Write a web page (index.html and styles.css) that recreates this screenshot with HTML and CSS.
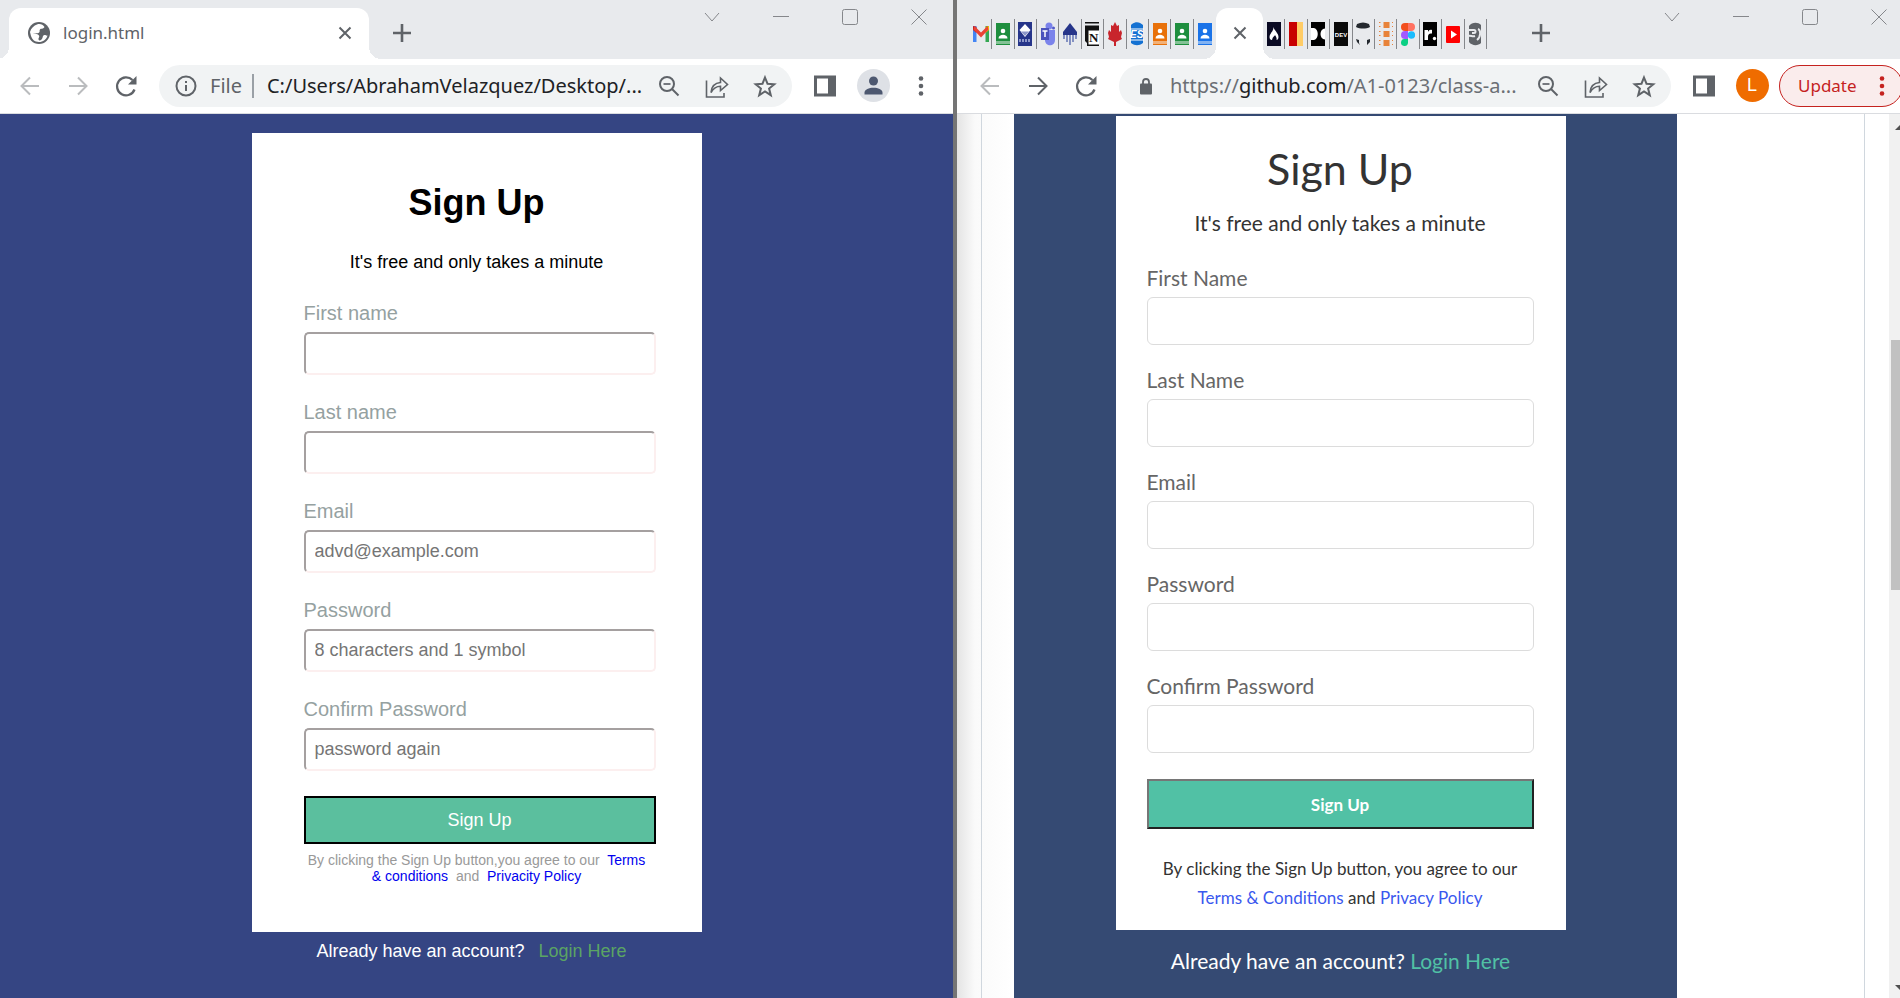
FILE: index.html
```html
<!DOCTYPE html>
<html lang="en">
<head>
<meta charset="utf-8">
<title>Sign Up</title>
<link rel="stylesheet" href="styles.css">
</head>
<body>
<svg class="sprite" aria-hidden="true">
  <symbol id="back" viewBox="0 0 24 24"><path d="M21 12H4M12 3.500L3.500 12l8.500 8.500" fill="none" stroke="currentColor" stroke-width="2"/></symbol>
  <symbol id="forward" viewBox="0 0 24 24"><path d="M3 12h17M12 3.500l8.500 8.500-8.500 8.500" fill="none" stroke="currentColor" stroke-width="2"/></symbol>
  <symbol id="reload" viewBox="0 0 24 24"><path d="M20.500 15.500A9 9 0 1 1 18.500 6" fill="none" stroke="currentColor" stroke-width="2.300"/><path d="M22.500 2v8.500H14z" fill="currentColor"/></symbol>
  <symbol id="zoomout" viewBox="0 0 24 24"><g fill="none" stroke="currentColor" stroke-width="2"><circle cx="10" cy="10" r="7"/><path d="M15 15l6.500 6.500"/><path d="M6.500 10h7" stroke-width="1.700"/></g></symbol>
  <symbol id="share" viewBox="0 0 24 24"><g fill="none" stroke="currentColor" stroke-width="1.600"><path d="M1.500 6.500v16.500h17.500v-4"/><path d="M6 18.500c.5-6 3-9.500 9.500-10V4l7 6.500-7 6v-4.200c-4 0-7 1.700-9.500 6.200z"/></g></symbol>
  <symbol id="star" viewBox="0 0 24 24"><path d="M12 3.500l2.500 6.200 6.800.5-5.200 4.300 1.700 6.700-5.800-3.700-5.800 3.700 1.700-6.700-5.200-4.300 6.800-.5z" fill="none" stroke="currentColor" stroke-width="2"/></symbol>
  <symbol id="panel" viewBox="0 0 24 24"><path d="M1 1.500h22v21H1zM4 4.500v15h11v-15z" fill="currentColor" fill-rule="evenodd"/></symbol>
  <symbol id="dots" viewBox="0 0 24 24"><g fill="currentColor"><circle cx="12" cy="4.500" r="2.300"/><circle cx="12" cy="12" r="2.300"/><circle cx="12" cy="19.500" r="2.300"/></g></symbol>
  <symbol id="cross" viewBox="0 0 24 24"><path d="M6.500 6.500l11 11M17.500 6.500l-11 11" fill="none" stroke="currentColor" stroke-width="2"/></symbol>
  <symbol id="plus" viewBox="0 0 24 24"><path d="M12 3v18M3 12h18" fill="none" stroke="currentColor" stroke-width="2.600"/></symbol>
  <symbol id="chevron" viewBox="0 0 16 16"><path d="M1 4l7 8 7-8" fill="none" stroke="currentColor"/></symbol>
  <symbol id="minimize" viewBox="0 0 16 16"><path d="M0 7.500h16" fill="none" stroke="currentColor"/></symbol>
  <symbol id="maximize" viewBox="0 0 16 16"><rect x=".5" y=".5" width="15" height="15" rx="2" fill="none" stroke="currentColor"/></symbol>
  <symbol id="close" viewBox="0 0 16 16"><path d="M.5.500l15 15M15.500.500l-15 15" fill="none" stroke="currentColor"/></symbol>
  <symbol id="globe" viewBox="0 0 24 24"><circle cx="12" cy="12" r="11" fill="currentColor"/><path d="M10 3.500c3-1 6 0 7.500 2.500-1.500 2.500-3.500 1-4.500 2.500s.5 2.500-1.500 3.500-4-.5-5.500 0c2.500 1 5 .500 6 2.500 1 1.500-1 2.500-.5 4 .5 1.500 2 1 3 0 2-2 .5-4 3-4.500 1.500 0 2 1 3 .5-1 4-4.500 6.500-8.500 6.500C7.500 21 5 18 4 15l-1-4C4 7 7 4.500 10 3.500z" fill="#fff"/></symbol>
  <symbol id="info" viewBox="0 0 24 24"><circle cx="12" cy="12" r="9.500" fill="none" stroke="currentColor" stroke-width="2"/><path d="M11 11h2v6h-2zM11 7h2v2h-2z" fill="currentColor"/></symbol>
  <symbol id="lock" viewBox="0 0 24 24"><rect x="6" y="9.500" width="12" height="11" rx="1" fill="currentColor"/><path d="M9 10V8a3 3 0 0 1 6 0v2" fill="none" stroke="currentColor" stroke-width="1.800"/></symbol>
  <symbol id="classroom" viewBox="0 0 14 24"><path d="M0 1h14v22H0z" fill="currentColor"/><circle cx="7" cy="9" r="2.300" fill="#fff"/><path d="M2.500 16.500c0-5 9-5 9 0z" fill="#fff"/><path d="M0 19h14v3H0z" fill="#fff" opacity=".45"/></symbol>
</svg>

<main class="desktop">
  <section class="window window-left" aria-label="login.html">
    <header class="tabstrip">
      <div class="tab tab-wide">
        <svg class="icon"><use href="#globe"/></svg>
        <span class="tab-title">login.html</span>
        <button class="plain" aria-label="Close tab"><svg class="icon"><use href="#cross"/></svg></button>
      </div>
      <button class="plain new-tab" aria-label="New tab"><svg class="icon"><use href="#plus"/></svg></button>
      <div class="controls">
        <button class="control" aria-label="Search tabs"><svg><use href="#chevron"/></svg></button>
        <button class="control" aria-label="Minimize"><svg><use href="#minimize"/></svg></button>
        <button class="control" aria-label="Maximize"><svg><use href="#maximize"/></svg></button>
        <button class="control" aria-label="Close"><svg><use href="#close"/></svg></button>
      </div>
    </header>
    <nav class="toolbar">
      <button class="tool muted" aria-label="Back"><svg class="icon"><use href="#back"/></svg></button>
      <button class="tool muted" aria-label="Forward"><svg class="icon"><use href="#forward"/></svg></button>
      <button class="tool" aria-label="Reload"><svg class="icon"><use href="#reload"/></svg></button>
      <div class="omnibox">
        <svg class="icon"><use href="#info"/></svg>
        <span class="scheme">File</span>
        <span class="url">C:/Users/AbrahamVelazquez/Desktop/...</span>
        <button class="tool" aria-label="Zoom"><svg class="icon"><use href="#zoomout"/></svg></button>
        <button class="tool" aria-label="Share"><svg class="icon"><use href="#share"/></svg></button>
        <button class="tool" aria-label="Bookmark"><svg class="icon"><use href="#star"/></svg></button>
      </div>
      <button class="tool" aria-label="Side panel"><svg class="icon"><use href="#panel"/></svg></button>
      <button class="tool" aria-label="Profile"><svg class="avatar" viewBox="0 0 33 33"><circle cx="16.500" cy="16.500" r="16.500" fill="#dee1e6"/><circle cx="16.500" cy="12" r="4.500" fill="#4d5870"/><path d="M7.500 25.500v-2c0-6.500 18-6.500 18 0v2z" fill="#4d5870"/></svg></button>
      <button class="tool" aria-label="Menu"><svg class="icon"><use href="#dots"/></svg></button>
    </nav>
    <div class="page page-indigo">
      <form class="card card-a">
        <h1 class="title-a">Sign Up</h1>
        <p class="lead-a">It's free and only takes a minute</p>
        <div class="fields-a">
          <div class="field-a"><label for="a-first">First name</label><input id="a-first" type="text"></div>
          <div class="field-a"><label for="a-last">Last name</label><input id="a-last" type="text"></div>
          <div class="field-a"><label for="a-email">Email</label><input id="a-email" type="email" placeholder="advd@example.com"></div>
          <div class="field-a"><label for="a-pass">Password</label><input id="a-pass" type="password" placeholder="8 characters and 1 symbol"></div>
          <div class="field-a"><label for="a-again">Confirm Password</label><input id="a-again" type="password" placeholder="password again"></div>
          <button class="submit-a" type="button">Sign Up</button>
        </div>
        <p class="terms-a">By clicking the Sign Up button,you agree to our&nbsp; <a href="#">Terms<br>&amp; conditions</a>&nbsp; and&nbsp; <a href="#">Privacity Policy</a></p>
      </form>
      <p class="login-a">Already have an account? &nbsp;<a href="#">Login Here</a></p>
    </div>
  </section>

  <section class="window window-right" aria-label="GitHub">
    <header class="tabstrip">
      <div class="favicons favicons-before">
        <span class="fav"><svg class="wide" viewBox="0 0 16 24"><path d="M0 4v16h3.500V4z" fill="#4285f4"/><path d="M12.500 4H16v16h-3.500z" fill="#34a853"/><path d="M0 4l3.500 1v6L0 8z" fill="#c5221f"/><path d="M16 4l-3.500 1v6L16 8z" fill="#fbbc04"/><path d="M1.500 4L8 10.500 14.500 4l1 3.500L8 15.500.5 7.500z" fill="#ea4335"/></svg></span>
        <span class="fav green"><svg><use href="#classroom"/></svg></span>
        <span class="fav"><svg viewBox="0 0 14 24"><path d="M0 0h14v24H0z" fill="#26358a"/><path d="M7 2l5.500 6L7 15 1.500 8z" fill="#fff"/><path d="M3 9.500h8L7 14z" fill="#8d97c9"/><path d="M1 18.500h12" stroke="#8d97c9" stroke-width="3" stroke-dasharray="2 1"/></svg></span>
        <span class="fav"><svg viewBox="0 0 14 24"><circle cx="8" cy="4" r="3.500" fill="#7b83eb"/><circle cx="12.500" cy="6" r="1.500" fill="#5059c9"/><path d="M4 8h10v10c0 7-10 7-10 0z" fill="#7b83eb"/><path d="M0 6h8v12H0z" fill="#4b53bc"/><path d="M1.500 9h5M4 9v6" stroke="#fff" stroke-width="1.500"/></svg></span>
        <span class="fav"><svg viewBox="0 0 14 24"><path d="M7 1l7 9v3H0v-3z" fill="#26358a"/><path d="M1 13v4M4 13v7M7 13v10M10 13v7M13 13v4" stroke="#5a6bb0" stroke-width="1.400"/></svg></span>
        <span class="fav"><svg viewBox="0 0 14 24"><path d="M0 0h14v1.500H0zM0 3.500h14V7H2v14l-2-2z" fill="#111"/><path d="M2 7h12v17H2z" fill="#111"/><path d="M3.500 8.500H14v14H3.500z" fill="#fff"/><text x="4" y="20" class="glyph-n">N</text></svg></span>
        <span class="fav"><svg viewBox="0 0 14 24"><path d="M7 0l2 4 2-1v7l2-2 1 3-1 4 1 2-6 3v4H6v-4l-6-3 1-2-1-4 1-3 2 2V3l2 1z" fill="#c8252c"/></svg></span>
        <span class="fav"><svg viewBox="0 0 14 24"><path d="M2 2c4-3 8-2 11 1v18c-4 3-8 3-12 0V3z" fill="#1471d2"/><text x="0" y="16" class="glyph-es">ES</text><path d="M0 7h14M0 18h14" stroke="#fff"/></svg></span>
        <span class="fav orange"><svg><use href="#classroom"/></svg></span>
        <span class="fav green"><svg><use href="#classroom"/></svg></span>
        <span class="fav blue"><svg><use href="#classroom"/></svg></span>
      </div>
      <div class="tab tab-narrow">
        <button class="plain" aria-label="Close tab"><svg class="icon"><use href="#cross"/></svg></button>
      </div>
      <div class="favicons favicons-after">
        <span class="fav"><svg viewBox="0 0 14 24"><path d="M0 0h14v24H0z" fill="#0a0a23"/><path d="M6.500 5c1 4 5 6 5 10 0 2-1 3-2 3 .5-2-.5-3-1.500-5-1 2-2 1-3 5-1.500 0-2.500-1-2.500-3 0-4 4-5 4-10z" fill="#fff"/></svg></span>
        <span class="fav"><svg viewBox="0 0 14 24"><path d="M0 0h8v24H0z" fill="#c80000"/><path d="M8 0h6v24H8z" fill="#ffcc66"/></svg></span>
        <span class="fav"><svg viewBox="0 0 14 24"><path d="M0 0h14v24H0z" fill="#000"/><path d="M0 6h3c5 1 5 11 0 12H0z" fill="#fff"/><path d="M14 6.500c-6 0-6 11 0 11z" fill="#fff"/></svg></span>
        <span class="fav"><svg viewBox="0 0 14 24"><path d="M0 0h14v24H0z" fill="#0a0a0a"/><text x="7" y="15" text-anchor="middle" class="glyph-dev">DEV</text></svg></span>
        <span class="fav"><svg viewBox="0 0 14 24"><path d="M1 2c4-2 8-2 12 0l1 3c-4 2-10 2-14 0z" fill="#24292f"/><path d="M0 17l3 1v3l1 2-3-3zM14 17l-3 1v5l3-3z" fill="#24292f"/></svg></span>
        <span class="fav"><svg viewBox="0 0 14 24"><g fill="#e8833a"><path d="M4.500 0h6v6h-6zM4.500 9h6v6h-6zM4.500 18h6v6h-6z"/><path d="M0 0h1.500v1H0zM0 4h1.500v1H0zM0 9h1.500v1H0zM0 13h1.500v1H0zM0 18h1.500v1H0zM0 22h1.500v1H0zM13 0h1v1h-1zM13 4h1v1h-1zM13 9h1v1h-1zM13 13h1v1h-1zM13 18h1v1h-1zM13 22h1v1h-1z"/></g></svg></span>
        <span class="fav"><svg viewBox="0 0 14 24"><path d="M7 1H4a4 4 0 0 0 0 8h3z" fill="#f24e1e"/><path d="M7 1h3a4 4 0 0 1 0 8H7z" fill="#ff7262"/><path d="M7 9H4a4 4 0 0 0 0 8h3z" fill="#a259ff"/><circle cx="10.500" cy="13" r="3.700" fill="#1abcfe"/><path d="M7 17H4a3.500 3.500 0 1 0 3 4z" fill="#0acf83"/></svg></span>
        <span class="fav"><svg viewBox="0 0 14 24"><path d="M0 0h14v24H0z" fill="#000"/><path d="M1.500 18V8h3.500v2C6 8 7 7.500 9 8v3.500c-3-.5-4 1-4 3V18z" fill="#fff"/><circle cx="11.500" cy="16.500" r="1.700" fill="#fff"/></svg></span>
        <span class="fav"><svg viewBox="0 0 14 24"><rect y="4" width="14" height="17" rx="1" fill="#f00"/><path d="M5 8.500l6 4-6 4z" fill="#fff"/></svg></span>
        <span class="fav"><svg viewBox="0 0 14 24"><path d="M1 4c3-4 9-4 12-1v18c-3 3-9 3-12-1z" fill="#5f6368"/><path d="M0 8h6c2 0 2 3 0 3H4M0 14c3-1 4 1 7 0M10 7c3 1 3 8-1 11" fill="none" stroke="#e8eaed" stroke-width="2"/></svg></span>
      </div>
      <button class="plain new-tab new-tab-far" aria-label="New tab"><svg class="icon"><use href="#plus"/></svg></button>
      <div class="controls controls-edge">
        <button class="control" aria-label="Search tabs"><svg><use href="#chevron"/></svg></button>
        <button class="control" aria-label="Minimize"><svg><use href="#minimize"/></svg></button>
        <button class="control" aria-label="Maximize"><svg><use href="#maximize"/></svg></button>
        <button class="control" aria-label="Close"><svg><use href="#close"/></svg></button>
      </div>
    </header>
    <nav class="toolbar toolbar-right">
      <button class="tool muted" aria-label="Back"><svg class="icon"><use href="#back"/></svg></button>
      <button class="tool" aria-label="Forward"><svg class="icon"><use href="#forward"/></svg></button>
      <button class="tool" aria-label="Reload"><svg class="icon"><use href="#reload"/></svg></button>
      <div class="omnibox">
        <svg class="icon"><use href="#lock"/></svg>
        <span class="url url-web">https://<b>github.com</b>/A1-0123/class-a...</span>
        <button class="tool" aria-label="Zoom"><svg class="icon"><use href="#zoomout"/></svg></button>
        <button class="tool" aria-label="Share"><svg class="icon"><use href="#share"/></svg></button>
        <button class="tool" aria-label="Bookmark"><svg class="icon"><use href="#star"/></svg></button>
      </div>
      <button class="tool" aria-label="Side panel"><svg class="icon"><use href="#panel"/></svg></button>
      <button class="tool" aria-label="Profile"><span class="initial">L</span></button>
      <button class="update">Update<svg class="icon"><use href="#dots"/></svg></button>
    </nav>
    <div class="page page-github">
      <div class="readme">
        <div class="band">
          <form class="card card-b">
            <h1 class="title-b">Sign Up</h1>
            <p class="lead-b">It's free and only takes a minute</p>
            <div class="field-b"><label for="b-first">First Name</label><input id="b-first" type="text"></div>
            <div class="field-b"><label for="b-last">Last Name</label><input id="b-last" type="text"></div>
            <div class="field-b"><label for="b-email">Email</label><input id="b-email" type="email"></div>
            <div class="field-b"><label for="b-pass">Password</label><input id="b-pass" type="password"></div>
            <div class="field-b"><label for="b-again">Confirm Password</label><input id="b-again" type="password"></div>
            <button class="submit-b" type="button">Sign Up</button>
            <p class="terms-b">By clicking the Sign Up button, you agree to our<br><a href="#">Terms &amp; Conditions</a> and <a href="#">Privacy Policy</a></p>
          </form>
          <p class="login-b">Already have an account? <a href="#">Login Here</a></p>
        </div>
      </div>
      <div class="scrollbar"><i class="arrow-up"></i><i class="thumb"></i><i class="arrow-down"></i></div>
    </div>
  </section>
</main>
</body>
</html>
```
FILE: styles.css
```css
* { box-sizing: border-box; }

body {
  margin: 0;
  font-family: "Liberation Sans", Arial, sans-serif;
}

h1, p { margin: 0; font-weight: normal; }
a { text-decoration: none; }
button { font-family: inherit; cursor: pointer; }
.sprite { position: absolute; width: 0; height: 0; }

.desktop {
  display: flex;
  height: 100vh;
  overflow: hidden;
}

.window {
  display: flex;
  flex-direction: column;
  min-width: 0;
  background: #fff;
}

.window-left { flex: 953 1 0; border-right: 4px solid #757575; }
.window-right { flex: 943 1 0; overflow: hidden; }

/* Tab strip */
.tabstrip {
  display: flex;
  align-items: flex-end;
  flex: none;
  height: 59px;
  background: #e8eaed;
  color: #5f6368;
}

.window-left .tabstrip { padding-left: 9px; }
.window-right .tabstrip { padding-left: 13px; }

.tab {
  position: relative;
  display: flex;
  align-items: center;
  height: 51px;
  padding-bottom: 2px;
  border-radius: 12px 12px 0 0;
  background: #fff;
}

.tab::before,
.tab::after {
  content: "";
  position: absolute;
  bottom: 0;
  width: 12px;
  height: 12px;
}

.tab::before { right: 100%; background: radial-gradient(circle at 0 0, transparent 12px, #fff 12px); }
.tab::after { left: 100%; background: radial-gradient(circle at 100% 0, transparent 12px, #fff 12px); }

.tab-wide { flex: 0 1 360px; gap: 12px; padding-left: 18px; padding-right: 12px; }
.tab-narrow { flex: none; width: 47px; justify-content: center; }
.tab-title { flex: 1; font: 17px "Noto Sans", sans-serif; }

.icon { display: block; width: 24px; height: 24px; flex: none; }

.plain {
  padding: 0;
  border: 0;
  background: none;
  color: #5f6368;
}

.new-tab { margin: 0 0 14px 21px; }
.new-tab-far { margin-left: 42px; }

.controls {
  display: flex;
  align-self: flex-start;
  margin-left: auto;
}

.control {
  display: flex;
  justify-content: center;
  width: 69px;
  padding: 9px 0;
  border: 0;
  background: none;
  color: #85878b;
}

.control svg { width: 16px; height: 16px; }
.controls-edge { margin-right: -13px; }

.favicons {
  display: grid;
  grid-auto-flow: column;
  grid-auto-columns: 1fr;
  margin-bottom: 10px;
  min-width: 0;
}

.favicons-before { width: 246px; }
.favicons-after { width: 224px; }

.fav {
  display: flex;
  align-items: center;
  justify-content: center;
  height: 30px;
  border-right: 1px solid #85878b;
}

.favicons-before .fav:last-child { border-right: 0; }
.fav svg { width: 14px; height: 24px; overflow: hidden; }
.fav .wide { width: 16px; }
.green { color: #1e8e3e; }
.orange { color: #e8710a; }
.blue { color: #1a73e8; }
.glyph-n { font: bold 13px "Liberation Serif", serif; fill: #111; }
.glyph-es { font: italic bold 10px "Liberation Sans", sans-serif; fill: #fff; }
.glyph-dev { font: bold 6px "Liberation Sans", sans-serif; fill: #fff; }

/* Toolbar */
.toolbar {
  display: flex;
  align-items: center;
  flex: none;
  height: 55px;
  padding: 0 8px 1px 6px;
  border-bottom: 1px solid #dadce0;
}

.toolbar-right { padding-left: 9px; padding-right: 0; }

.tool {
  display: flex;
  flex: none;
  justify-content: center;
  align-items: center;
  width: 48px;
  height: 40px;
  padding: 0;
  border: 0;
  background: none;
  color: #5f6368;
}

.tool.muted { color: #babcbe; }

.omnibox {
  display: flex;
  flex: 1;
  align-items: center;
  min-width: 0;
  height: 42px;
  margin: 0 9px;
  padding: 0 3px 0 15px;
  border-radius: 21px;
  background: #f1f3f4;
  color: #5f6368;
  font: 20px "Noto Sans", sans-serif;
}

.scheme {
  margin-left: 12px;
  padding-right: 10px;
  border-right: 2px solid #9aa0a6;
  line-height: 24px;
}

.url {
  flex: 1;
  margin-left: 13px;
  overflow: hidden;
  white-space: nowrap;
  color: #202124;
}

.url-web { margin-left: 12px; color: #6b6f74; }
.url-web b { font-weight: normal; color: #202124; }

.avatar { width: 33px; height: 33px; }

.initial {
  width: 33px;
  height: 33px;
  border-radius: 50%;
  background: #ef6c00;
  color: #fff;
  font-size: 18px;
  line-height: 33px;
}

.update {
  display: flex;
  flex: none;
  align-items: center;
  justify-content: space-between;
  width: 124px;
  height: 42px;
  margin: 0 -3px 0 3px;
  padding: 0 8px 0 18px;
  border: 1px solid #c5221f;
  border-radius: 21px;
  background: #faecec;
  color: #c5221f;
  font: 17px "Noto Sans", sans-serif;
}

/* Pages */
.page { flex: 1; min-height: 0; overflow: hidden; }
.card { background: #fff; }

.page-indigo { padding-top: 19px; background: #354583; }

.card-a {
  width: 450px;
  margin: 0 auto;
  padding: 49px 0 48px;
}

.title-a {
  font-size: 36px;
  font-weight: bold;
  line-height: 42px;
  text-align: center;
  color: #000;
}

.lead-a {
  margin: 28px 0 29px;
  font-size: 18px;
  line-height: 20px;
  text-align: center;
}

.fields-a { padding: 0 46px 0 52px; }
.field-a { margin-bottom: 25px; }

.field-a label {
  display: block;
  margin-bottom: 7px;
  font-size: 20px;
  line-height: 24px;
  color: #95a1a1;
}

.field-a input {
  display: block;
  width: 100%;
  height: 43px;
  padding: 0 9px;
  border: 2px solid;
  border-color: #a5a0a0 #fcefef #fcefef #a5a0a0;
  border-radius: 5px;
  font-family: inherit;
  font-size: 18px;
}

.field-a input::placeholder { color: #757575; }

.submit-a {
  display: block;
  width: 100%;
  height: 48px;
  border: 2px solid #000;
  background: #5bbf9e;
  color: #fff;
  font-size: 18px;
}

.terms-a {
  margin-top: 8px;
  font-size: 14px;
  line-height: 16px;
  text-align: center;
  color: #999;
}

.terms-a a { color: #0000ee; }

.login-a {
  margin-top: 9px;
  padding-right: 10px;
  font-size: 18px;
  line-height: 20px;
  text-align: center;
  color: #fff;
}

.login-a a { margin-left: 4px; color: #5ba463; }

.page-github {
  display: flex;
  padding-left: 24px;
  background: linear-gradient(to right, #e4e4e4, #fafafa 18px, #fff 56px);
  font-family: Lato, sans-serif;
}

.readme {
  flex: 1;
  margin-right: 24px;
  padding: 0 187px 0 32px;
  border: solid #d0d7de;
  border-width: 0 1px;
}

.band {
  height: 100%;
  padding: 2px 10px 0 0;
  background: #354a73;
}

.card-b {
  width: 450px;
  margin: 0 auto;
  padding: 28px 32px 18px 31px;
}

.title-b {
  font-size: 43px;
  line-height: 50px;
  text-align: center;
  color: #333;
}

.lead-b {
  margin: 17px 0 31px;
  font-size: 21px;
  line-height: 24px;
  text-align: center;
  color: #333;
}

.field-b { margin-bottom: 23px; }

.field-b label {
  display: block;
  margin-bottom: 7px;
  font-size: 21px;
  line-height: 24px;
  color: #666;
}

.field-b input {
  display: block;
  width: 100%;
  height: 48px;
  padding: 0 12px;
  border: 1px solid #dcdcdc;
  border-radius: 6px;
  font: 21px Lato, sans-serif;
}

.submit-b {
  display: block;
  width: 100%;
  height: 50px;
  margin-top: 26px;
  border: 2px solid;
  border-color: #767676 #222 #222 #767676;
  background: #51c1a5;
  color: #fff;
  font-size: 17px;
  font-weight: bold;
}

.terms-b {
  margin-top: 25px;
  font-size: 17px;
  line-height: 29px;
  text-align: center;
  color: #333;
}

.terms-b a { color: #3a58ee; }

.login-b {
  margin-top: 19px;
  font-size: 21px;
  line-height: 24px;
  text-align: center;
  color: #fff;
}

.login-b a { color: #51c1a5; }

.scrollbar {
  display: flex;
  flex: none;
  flex-direction: column;
  align-items: flex-end;
  width: 11px;
  overflow: hidden;
  background: #f1f1f1;
}

.arrow-up,
.arrow-down {
  flex: none;
  width: 5px;
  height: 5px;
  background: #505050;
}

.arrow-up { margin-top: 11px; clip-path: polygon(100% 0, 100% 100%, 0 100%); }
.arrow-down { margin: auto 0 8px; clip-path: polygon(0 0, 100% 0, 100% 100%); }
.thumb { flex: 0 1 187px; width: 9px; margin-top: 210px; background: #c1c1c1; }
.thumb { flex-basis: 250px; flex-shrink: 0; }
```
